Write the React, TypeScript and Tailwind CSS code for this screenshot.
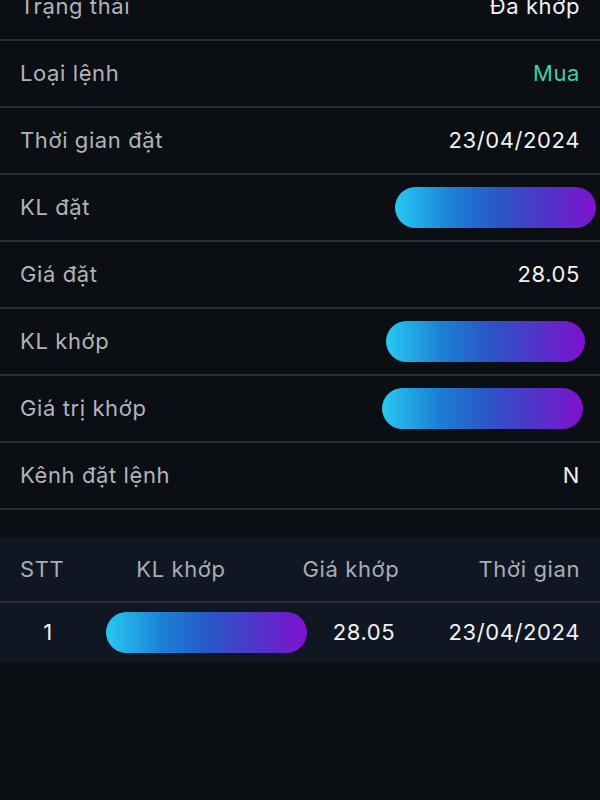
const font = { fontFamily: "Inter, 'Noto Sans', sans-serif" };

type Row = { label: string; value?: string; kind?: "text" | "green" | "pill"; pillClass?: string };

const ROWS: Row[] = [
  { label: "Trạng thái", value: "Đã khớp" },
  { label: "Loại lệnh", value: "Mua", kind: "green" },
  { label: "Thời gian đặt", value: "23/04/2024" },
  { label: "KL đặt", kind: "pill", pillClass: "w-[201px] -mr-4" },
  { label: "Giá đặt", value: "28.05" },
  { label: "KL khớp", kind: "pill", pillClass: "w-[199px] -mr-[5px]" },
  { label: "Giá trị khớp", kind: "pill", pillClass: "w-[201px] -mr-[3px]" },
  { label: "Kênh đặt lệnh", value: "N" },
];

const PILL =
  "h-[41px] rounded-full bg-[linear-gradient(90deg,#28c8f1_0%,#1c80d5_28%,#2a56c7_52%,#5530c9_78%,#8011cf_100%)]";

export default function App() {
  return (
    <main
      className="min-h-[800px] overflow-hidden bg-[#0b0e13] text-[22px] tracking-[0.6px]"
      style={font}
    >
      <div className="-mt-[26px]">
        {ROWS.map((row) => (
          <div
            key={row.label}
            className="flex h-[67px] items-center justify-between border-b-2 border-[#2a2e35] px-5"
          >
            <span className="text-[#b1b4bb]">{row.label}</span>
            {row.kind === "pill" ? (
              <span className={`${PILL} ${row.pillClass}`} />
            ) : (
              <span className={row.kind === "green" ? "text-[#3fcfa6]" : "text-[#f1f2f4]"}>
                {row.value}
              </span>
            )}
          </div>
        ))}
      </div>

      <section className="mt-[27px] bg-[#111722]">
        <div className="flex h-[66px] items-center border-b-2 border-[#2a2e35] px-5 text-[#a9adb5]">
          <span className="w-[100px]">STT</span>
          <span className="w-[122px] text-center">KL khớp</span>
          <span className="w-[218px] text-center">Giá khớp</span>
          <span className="flex-1 text-right">Thời gian</span>
        </div>
        <div className="flex h-[59px] items-center px-5 text-[#f1f2f4]">
          <span className="w-[56px] text-center">1</span>
          <span className={`${PILL} ml-[30px] w-[201px]`} />
          <span className="w-[114px] text-center">28.05</span>
          <span className="flex-1 text-right">23/04/2024</span>
        </div>
      </section>
    </main>
  );
}
